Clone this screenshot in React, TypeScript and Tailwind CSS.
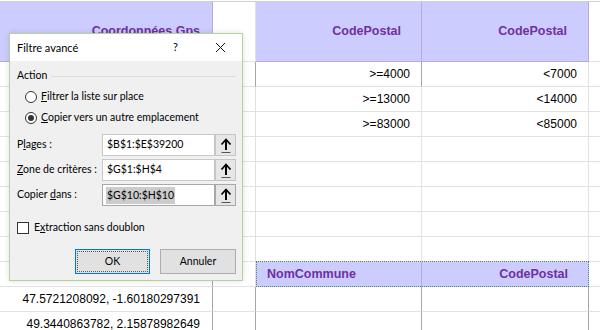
import React from "react";

const grid = "border-[#e2e2e2]";

function Cell({
  children,
  className = "",
}: {
  children?: React.ReactNode;
  className?: string;
}) {
  return (
    <div
      className={`h-[25px] border-r border-b ${grid} flex items-center whitespace-nowrap overflow-hidden text-[12px] text-black ${className}`}
    >
      {children}
    </div>
  );
}

function RefButton({ dark = false }: { dark?: boolean }) {
  return (
    <div
      className={`w-[21px] h-[22px] border ${dark ? "border-[#a8a8a8]" : "border-[#c4c4c4]"} bg-[#e6e6e6] flex items-center justify-center`}
    >
      <svg width="12" height="17" viewBox="0 0 12 17">
        <path d="M6 3 L6 13" stroke="#000" strokeWidth="2" />
        <path d="M1.5 7.5 L6 2.5 L10.5 7.5" stroke="#000" strokeWidth="1.8" fill="none" />
        <path d="M1.5 15.5 L10.5 15.5" stroke="#555" strokeWidth="1" />
      </svg>
    </div>
  );
}

function Radio({ checked }: { checked?: boolean }) {
  return (
    <div className="w-[12px] h-[12px] shrink-0 rounded-full border border-[#333] bg-white flex items-center justify-center">
      {checked && <div className="w-[6px] h-[6px] rounded-full bg-[#333]" />}
    </div>
  );
}

function Dialog() {
  return (
    <div className="absolute left-[9px] top-[33px] w-[234px] h-[248px] border border-[#b2d497] bg-[#f0f0f0] flex flex-col shadow-[0_0_6px_rgba(0,0,0,0.12)] text-[10.5px] whitespace-nowrap text-black [font-family:Lato,'Noto_Sans',sans-serif]">
      <div className="h-[27px] bg-white flex items-center pl-[7px] shrink-0 text-[11px]">
        <span className="flex-1 pt-[1px]">Filtre avancé</span>
        <span className="w-[10px] mr-[32px]">?</span>
        <svg width="11" height="11" viewBox="0 0 11 11" className="mr-[16px]">
          <path d="M1 1 L10 10 M10 1 L1 10" stroke="#111" strokeWidth="1" />
        </svg>
      </div>
      <div className="flex flex-col pl-[7px] pr-[6px]">
        <div className="flex items-center mt-[7px] h-[16px]">
          <span>Action</span>
          <div className="flex-1 h-px bg-[#dcdcdc] ml-[4px]" />
        </div>
        <div className="flex items-center gap-[4px] pl-[8px] mt-[5px] h-[16px]">
          <Radio />
          <span>
            <span className="underline">F</span>iltrer la liste sur place
          </span>
        </div>
        <div className="flex items-center gap-[4px] pl-[8px] mt-[5px] h-[16px]">
          <Radio checked />
          <span>
            <span className="underline">C</span>opier vers un autre emplacement
          </span>
        </div>
        <div className="flex flex-col gap-[3px] mt-[8px]">
          <div className="flex items-center h-[22px]">
            <span className="w-[85px]">
              P<span className="underline">l</span>ages :
            </span>
            <div className="w-[113px] h-[22px] border border-[#c8c8c8] bg-white flex items-center pl-[4px]">
              $B$1:$E$39200
            </div>
            <RefButton />
          </div>
          <div className="flex items-center h-[22px]">
            <span className="w-[85px]">
              <span className="underline">Z</span>one de critères :
            </span>
            <div className="w-[113px] h-[22px] border border-[#c8c8c8] bg-white flex items-center pl-[4px]">
              $G$1:$H$4
            </div>
            <RefButton />
          </div>
          <div className="flex items-center h-[22px]">
            <span className="w-[85px]">
              Copier <span className="underline">d</span>ans :
            </span>
            <div className="w-[113px] h-[22px] border border-[#a8a8a8] bg-white flex items-center pl-[3px]">
              <span className="bg-[#cccccc] px-[1px] leading-[17px]">$G$10:$H$10</span>
            </div>
            <RefButton dark />
          </div>
        </div>
        <div className="flex items-center gap-[5px] mt-[14px] h-[16px]">
          <div className="w-[12px] h-[12px] border border-[#333] bg-white" />
          <span>
            E<span className="underline">x</span>traction sans doublon
          </span>
        </div>
        <div className="flex justify-end gap-[10px] mt-[13px]">
          <div className="w-[75px] h-[25px] border border-[#0078d7] bg-[#e1e1e1] p-[1px]">
            <div className="w-full h-full border border-dotted border-[#5a5a5a] flex items-center justify-center">
              OK
            </div>
          </div>
          <div className="w-[76px] h-[25px] border border-[#adadad] bg-[#e1e1e1] flex items-center justify-center">
            Annuler
          </div>
        </div>
      </div>
    </div>
  );
}

export default function App() {
  const hdr = "text-[#7030a0] font-bold text-[12.5px]";
  const rows: Array<[string, string, string, string]> = [
    ["44.8375600491, -0.57918102136", "", ">=4000", "<7000"],
    ["", "", ">=13000", "<14000"],
    ["", "", ">=83000", "<85000"],
    ["", "", "", ""],
    ["", "", "", ""],
    ["", "", "", ""],
    ["", "", "", ""],
    ["", "", "", ""],
  ];
  const dark = "border-r-[#a6a6a6]";
  return (
    <div className="w-[600px] h-[330px] overflow-hidden bg-white relative [font-family:'Liberation_Sans',Arial,sans-serif]">
      <div className="pt-[1px]">
        <div className="grid grid-cols-[213px_43px_166px_167px_1fr] border-t border-[#d0d0d0]">
          <div className={`h-[60px] bg-[#ccccff] border-r border-b border-[#b8a8e8] flex items-center justify-end pr-[12px] ${hdr}`}>
            Coordonnées Gps
          </div>
          <div className={`h-[60px] border-r border-b ${grid}`} />
          <div className={`h-[60px] bg-[#ccccff] border-r border-b border-[#b8a8e8] flex items-center justify-end pr-[20px] ${hdr}`}>
            CodePostal
          </div>
          <div className={`h-[60px] bg-[#ccccff] border-r border-b border-[#b8a8e8] flex items-center justify-end pr-[21px] ${hdr}`}>
            CodePostal
          </div>
          <div className={`h-[60px] border-b ${grid}`} />

          {rows.map((r, i) => (
            <React.Fragment key={i}>
              <Cell className="justify-end pr-[12px]">{r[0]}</Cell>
              <Cell className={i === 0 ? dark : ""}>{r[1]}</Cell>
              <Cell className={`justify-end pr-[11px] ${i === 0 ? dark : ""}`}>{r[2]}</Cell>
              <Cell className="justify-end pr-[11px]">{r[3]}</Cell>
              <Cell className="border-r-0" />
            </React.Fragment>
          ))}

          <Cell className={`${dark}`} />
          <Cell />
          <div className="col-span-2 relative h-[25px] flex">
            <div className={`w-[166px] h-[25px] bg-[#ccccff] border-r border-[#b8a8e8] flex items-center pl-[11px] ${hdr}`}>
              NomCommune
            </div>
            <div className={`w-[167px] h-[25px] bg-[#ccccff] flex items-center justify-end pr-[21px] ${hdr}`}>
              CodePostal
            </div>
            <div className="absolute left-0 right-0 top-[-1px] bottom-0 border border-dotted border-[#3f8a63] pointer-events-none" />
          </div>
          <Cell className="border-r-0" />

          {[
            "47.5721208092, -1.60180297391",
            "49.3440863782, 2.15878982649",
          ].map((t, i) => (
            <React.Fragment key={`b${i}`}>
              <Cell className={`justify-end pr-[12px] ${dark}`}>{t}</Cell>
              <Cell className={dark} />
              <Cell className={dark} />
              <Cell className={dark} />
              <Cell className="border-r-0" />
            </React.Fragment>
          ))}
        </div>
      </div>
      <Dialog />
    </div>
  );
}
